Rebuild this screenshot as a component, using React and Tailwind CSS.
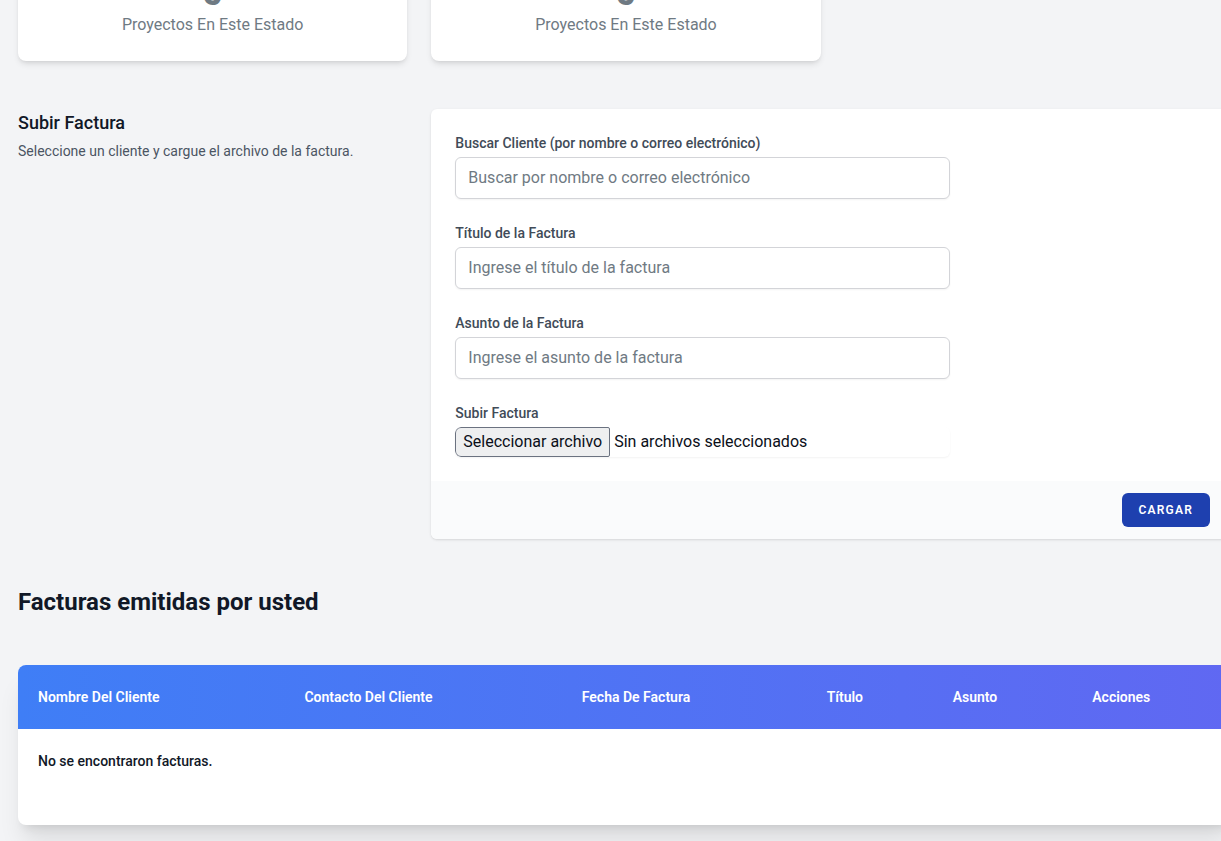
import { useRef, useState } from 'react';

const estados = [
  { id: 1, total: 0 },
  { id: 2, total: 0 },
];

const columnas = ['Nombre Del Cliente', 'Contacto Del Cliente', 'Fecha De Factura', 'Título', 'Asunto', 'Acciones'];

function Campo({ id, label, placeholder, value, onChange }) {
  return (
    <div>
      <label htmlFor={id} className="block text-sm font-medium text-[#414b58]">{label}</label>
      <input id={id} type="text" value={value} onChange={e => onChange(e.target.value)} placeholder={placeholder}
        className="mt-1 block w-full rounded-md border border-[#d3d4d8] bg-white px-3 py-2 text-base shadow-xs placeholder:text-[#6f7a83] focus:border-[#6366f1] outline-none" />
    </div>
  );
}

function SubirFactura() {
  const [cliente, setCliente] = useState('');
  const [titulo, setTitulo] = useState('');
  const [asunto, setAsunto] = useState('');
  const [archivo, setArchivo] = useState(null);
  const fileRef = useRef(null);

  return (
    <section className="mt-12 grid grid-cols-3 gap-6">
      <div>
        <h3 className="text-lg/7 font-medium text-[#111827]">Subir Factura</h3>
        <p className="mt-1 text-sm text-[#4b5563]">Seleccione un cliente y cargue el archivo de la factura.</p>
      </div>
      <form onSubmit={e => e.preventDefault()} className="col-span-2 rounded-md bg-white shadow">
        <div className="grid grid-cols-6 gap-6 p-6">
          <div className="col-span-4 flex flex-col gap-6">
            <Campo id="cliente" label="Buscar Cliente (por nombre o correo electrónico)"
              placeholder="Buscar por nombre o correo electrónico" value={cliente} onChange={setCliente} />
            <Campo id="titulo" label="Título de la Factura" placeholder="Ingrese el título de la factura"
              value={titulo} onChange={setTitulo} />
            <Campo id="asunto" label="Asunto de la Factura" placeholder="Ingrese el asunto de la factura"
              value={asunto} onChange={setAsunto} />
            <div>
              <label htmlFor="archivo" className="block text-sm font-medium text-[#414b58]">Subir Factura</label>
              <input ref={fileRef} id="archivo" type="file" className="hidden"
                onChange={e => setArchivo(e.target.files[0] || null)} />
              <div className="mt-1 flex items-center gap-1 overflow-hidden rounded-md shadow-xs">
                <button type="button" onClick={() => fileRef.current.click()}
                  className="rounded-xs rounded-l-md border border-[#6b7280] bg-[#eeeff0] px-[7px] py-0.5 text-base text-[#0b0f19]">
                  Seleccionar archivo
                </button>
                <span className="text-base text-[#0b0f19]">{archivo ? archivo.name : 'Sin archivos seleccionados'}</span>
              </div>
            </div>
          </div>
        </div>
        <div className="flex justify-end rounded-b-md bg-[#fafbfc] px-6 py-3">
          <button type="submit" className="rounded-md border border-transparent bg-[#1e40af] px-4 py-2 text-xs font-semibold uppercase tracking-widest text-white">
            Cargar
          </button>
        </div>
      </form>
    </section>
  );
}

function TablaFacturas() {
  return (
    <section className="mt-12">
      <h2 className="text-2xl/[30px] font-bold text-[#111827]">Facturas emitidas por usted</h2>
      <div className="mt-12 overflow-hidden rounded-lg bg-white pb-8 shadow-xl">
        <table className="w-full text-left text-sm">
          <thead>
            <tr className="bg-linear-to-r/srgb from-[#3f7ef6] to-[#6068f2] text-white">
              {columnas.map(c => <th key={c} className="px-5 py-[22px] font-semibold">{c}</th>)}
            </tr>
          </thead>
          <tbody>
            <tr>
              <td colSpan={columnas.length} className="px-5 py-[22px] font-medium text-[#111827]">No se encontraron facturas.</td>
            </tr>
          </tbody>
        </table>
      </div>
    </section>
  );
}

export default function App() {
  return (
    <div className="min-h-screen overflow-hidden bg-[#f3f4f6] font-['Roboto',sans-serif]">
      <main className="-mt-[51px] ml-[18px] -mr-[13px]">
        <div className="grid grid-cols-3 gap-6">
          {estados.map(e => (
            <div key={e.id} className="rounded-lg bg-white p-6 text-center text-[#6f7a83] shadow-md">
              <p className="text-4xl font-extrabold">{e.total}</p>
              <p className="text-base">Proyectos En Este Estado</p>
            </div>
          ))}
        </div>
        <SubirFactura />
        <TablaFacturas />
      </main>
    </div>
  );
}
